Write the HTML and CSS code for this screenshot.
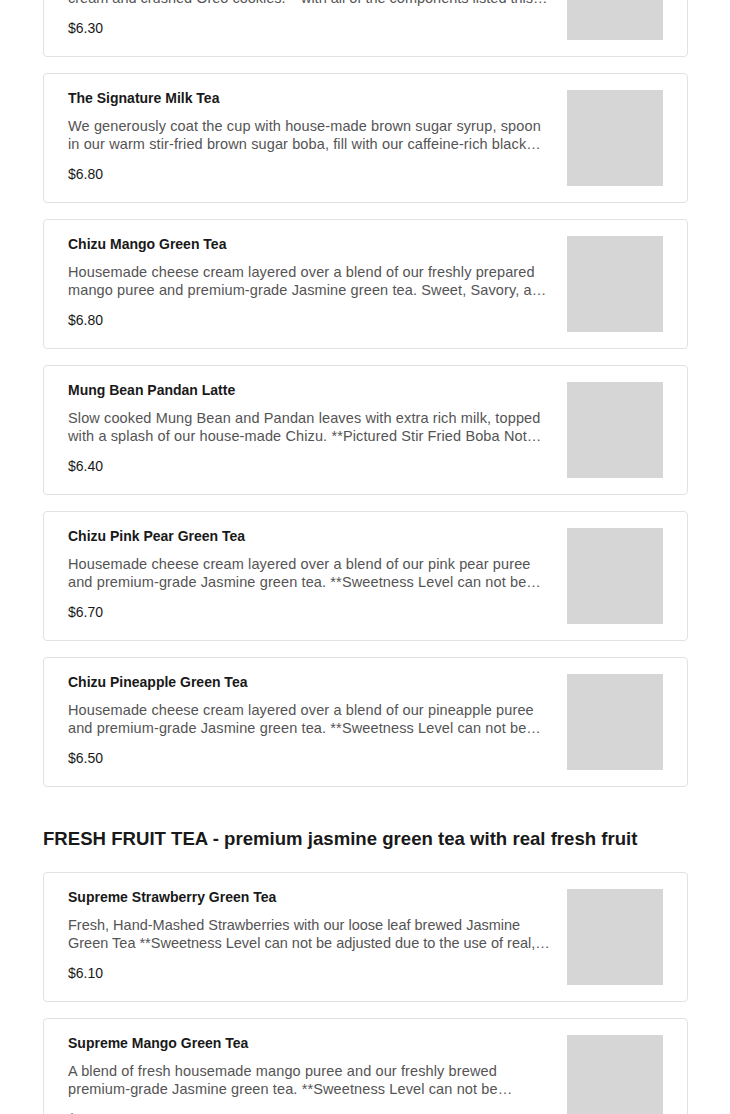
FILE: index.html
```html
<!DOCTYPE html>
<html lang="en">
<head>
    <meta charset="UTF-8">
    <meta name="viewport" content="width=device-width, initial-scale=1.0">
    <title>Menu</title>
    <link rel="stylesheet" href="styles.css">
</head>
<body>
    <div class="menu">
        <div class="item-list first-list">
            <div class="item">
                <div class="item-info">
                    <h3 class="item-name">Oreo Chizu Milk Tea</h3>
                    <p class="item-desc tight">Signature brown sugar boba milk tea topped with house-made cheese cream and crushed Oreo cookies. **with all of the components listed this…</p>
                    <span class="item-price">$6.30</span>
                </div>
                <div class="item-img"></div>
            </div>
            <div class="item">
                <div class="item-info">
                    <h3 class="item-name">The Signature Milk Tea</h3>
                    <p class="item-desc">We generously coat the cup with house-made brown sugar syrup, spoon in our warm stir-fried brown sugar boba, fill with our caffeine-rich black…</p>
                    <span class="item-price">$6.80</span>
                </div>
                <div class="item-img"></div>
            </div>
            <div class="item">
                <div class="item-info">
                    <h3 class="item-name">Chizu Mango Green Tea</h3>
                    <p class="item-desc">Housemade cheese cream layered over a blend of our freshly prepared mango puree and premium-grade Jasmine green tea. Sweet, Savory, a…</p>
                    <span class="item-price">$6.80</span>
                </div>
                <div class="item-img"></div>
            </div>
            <div class="item">
                <div class="item-info">
                    <h3 class="item-name">Mung Bean Pandan Latte</h3>
                    <p class="item-desc">Slow cooked Mung Bean and Pandan leaves with extra rich milk, topped with a splash of our house-made Chizu. **Pictured Stir Fried Boba Not…</p>
                    <span class="item-price">$6.40</span>
                </div>
                <div class="item-img"></div>
            </div>
            <div class="item">
                <div class="item-info">
                    <h3 class="item-name">Chizu Pink Pear Green Tea</h3>
                    <p class="item-desc">Housemade cheese cream layered over a blend of our pink pear puree and premium-grade Jasmine green tea. **Sweetness Level can not be…</p>
                    <span class="item-price">$6.70</span>
                </div>
                <div class="item-img"></div>
            </div>
            <div class="item">
                <div class="item-info">
                    <h3 class="item-name">Chizu Pineapple Green Tea</h3>
                    <p class="item-desc">Housemade cheese cream layered over a blend of our pineapple puree and premium-grade Jasmine green tea. **Sweetness Level can not be…</p>
                    <span class="item-price">$6.50</span>
                </div>
                <div class="item-img"></div>
            </div>
        </div>

        <h2 class="section-title">FRESH FRUIT TEA - premium jasmine green tea with real fresh fruit</h2>

        <div class="item-list">
            <div class="item">
                <div class="item-info">
                    <h3 class="item-name">Supreme Strawberry Green Tea</h3>
                    <p class="item-desc tight">Fresh, Hand-Mashed Strawberries with our loose leaf brewed Jasmine Green Tea **Sweetness Level can not be adjusted due to the use of real,…</p>
                    <span class="item-price">$6.10</span>
                </div>
                <div class="item-img"></div>
            </div>
            <div class="item">
                <div class="item-info">
                    <h3 class="item-name">Supreme Mango Green Tea</h3>
                    <p class="item-desc">A blend of fresh housemade mango puree and our freshly brewed premium&#8209;grade Jasmine green tea. **Sweetness Level can not be…</p>
                    <span class="item-price">$6.30</span>
                </div>
                <div class="item-img"></div>
            </div>
        </div>
    </div>
</body>
</html>
```

FILE: styles.css
```css
body {
    margin: 0;
    font-family: "Liberation Sans", Arial, sans-serif;
    background-color: #fff;
    color: #191919;
}
.menu {
    width: 645px;
    margin: 0 auto 0 43px;
}
.item-list {
    display: flex;
    flex-direction: column;
    gap: 16px;
}
.first-list {
    margin-top: -73px;
}
.item {
    display: flex;
    gap: 14px;
    padding: 16px 24px;
    border: 1px solid #e2e2e2;
    border-radius: 4px;
}
.item-info {
    flex: 1;
    min-width: 0;
}
.item-name {
    margin: 0 0 11px;
    font-size: 14px;
    line-height: 16px;
    font-weight: 700;
}
.item-desc {
    margin: 0 0 12px;
    font-size: 14.5px;
    line-height: 18px;
    letter-spacing: 0.12px;
    color: #545454;
    display: -webkit-box;
    -webkit-line-clamp: 2;
    -webkit-box-orient: vertical;
    overflow: hidden;
}
.item-desc.tight {
    letter-spacing: 0;
}
.item-price {
    display: block;
    font-size: 14px;
    line-height: 18px;
}
.item-img {
    width: 96px;
    height: 96px;
    flex-shrink: 0;
    background-color: #d6d6d6;
}
.section-title {
    margin: 0;
    padding: 40px 0 21px;
    font-size: 18.6px;
    line-height: 24px;
    font-weight: 600;
}
```
